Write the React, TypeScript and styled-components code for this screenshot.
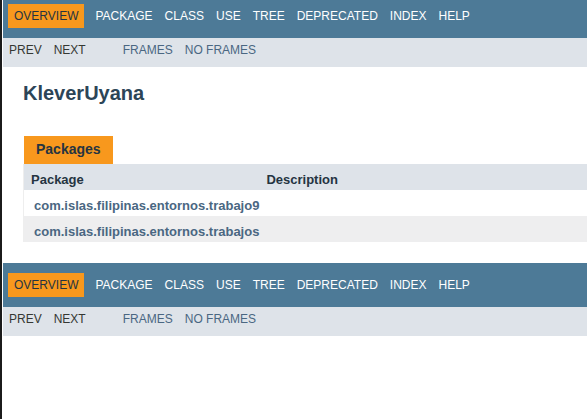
import React from 'react'
import { styled, createGlobalStyle } from 'styled-components'

const GlobalStyle = createGlobalStyle`
    html, body {
        margin: 0;
        padding: 0;
        overflow: hidden;
        background: #ffffff;
    }
    body {
        font-family: "Liberation Sans", Arial, Helvetica, sans-serif;
        font-size: 14px;
        color: #353833;
    }
`

const mainLinks = ['Overview', 'Package', 'Class', 'Use', 'Tree', 'Deprecated', 'Index', 'Help']

const packages = [
    'com.islas.filipinas.entornos.trabajo9',
    'com.islas.filipinas.entornos.trabajos',
]

const TopNavigation = ({ cropped }: { cropped?: boolean }) => (
    <>
        <NavBar $cropped={cropped}>
            <NavList>
                {mainLinks.map((label) => (
                    <NavItem key={label} $active={label === 'Overview'}>{label}</NavItem>
                ))}
            </NavList>
        </NavBar>
        <SubNav>
            <NavList>
                <SubItem>Prev</SubItem>
                <SubItem>Next</SubItem>
            </NavList>
            <NavList>
                <SubItem $link>Frames</SubItem>
                <SubItem $link>No Frames</SubItem>
            </NavList>
        </SubNav>
    </>
)

const App = () => {
    return (
        <Page>
            <GlobalStyle />
            <TopNavigation cropped />

            <Header>
                <Title>KleverUyana</Title>
            </Header>

            <ContentContainer>
                <CaptionTab>Packages</CaptionTab>
                <SummaryTable>
                    <thead>
                        <tr>
                            <HeadCell $first>Package</HeadCell>
                            <HeadCell>Description</HeadCell>
                        </tr>
                    </thead>
                    <tbody>
                        {packages.map((name, index) => (
                            <Row key={name} $alt={index % 2 === 1}>
                                <NameCell><PackageLink>{name}</PackageLink></NameCell>
                                <DescCell>&nbsp;</DescCell>
                            </Row>
                        ))}
                    </tbody>
                </SummaryTable>
            </ContentContainer>

            <TopNavigation />
        </Page>
    )
}

const Page = styled.div`
    min-height: 100vh;
    box-sizing: border-box;
    border-left: 2px solid #1b1b1b;
    padding-left: 1px;
`

const NavBar = styled.div<{ $cropped?: boolean }>`
    background-color: #4d7a97;
    height: 33.6px;
    padding-top: ${({ $cropped }) => ($cropped ? '4.4px' : '10px')};
    font-size: 12px;
    overflow: hidden;
    display: flex;
`

const NavList = styled.ul`
    display: flex;
    margin: 0 25px 0 0;
    padding: 0;
    list-style: none;
    align-self: flex-start;
`

const NavItem = styled.li<{ $active?: boolean }>`
    padding: 5px 6px;
    line-height: 14px;
    text-transform: uppercase;
    color: ${({ $active }) => ($active ? '#253441' : '#ffffff')};
    background-color: ${({ $active }) => ($active ? '#f8981d' : 'transparent')};
    margin: ${({ $active }) => ($active ? '0 5px' : '0')};
`

const SubNav = styled.div`
    background-color: #dee3e9;
    height: 29px;
    font-size: 12px;
    display: flex;
    overflow: hidden;
`

const SubItem = styled.li<{ $link?: boolean }>`
    padding: 5px 6px;
    line-height: 14px;
    text-transform: uppercase;
    color: ${({ $link }) => ($link ? '#4a6782' : '#353833')};
`

const Header = styled.div`
    margin: 0 20px;
    padding-top: 5px;
`

const Title = styled.h1`
    margin: 10px 0;
    font-size: 20px;
    line-height: 23px;
    font-weight: bold;
    color: #2c4557;
`

const ContentContainer = styled.div`
    padding: 21px 0 21px 20px;
`

const CaptionTab = styled.div`
    display: inline-block;
    box-sizing: content-box;
    height: 16px;
    line-height: 16px;
    padding: 5px 12px 7px 12px;
    margin-left: 1px;
    background-color: #f8981d;
    color: #253441;
    font-size: 14px;
    font-weight: bold;
    white-space: nowrap;
    vertical-align: top;
`

const SummaryTable = styled.table`
    width: 100%;
    border-collapse: collapse;
    border-left: 1px solid #eeeeee;
`

const HeadCell = styled.th<{ $first?: boolean }>`
    background-color: #dee3e9;
    text-align: left;
    padding: 8px 3px 3px 7px;
    font-size: 13px;
    line-height: 15px;
    font-weight: bold;
    color: #253441;
    white-space: nowrap;
    width: ${({ $first }) => ($first ? '1%' : 'auto')};
`

const Row = styled.tr<{ $alt?: boolean }>`
    background-color: ${({ $alt }) => ($alt ? '#eeeeef' : '#ffffff')};
`

const NameCell = styled.td`
    padding: 8px 0 3px 10px;
    font-size: 13px;
    line-height: 15px;
    white-space: nowrap;
    vertical-align: top;
`

const DescCell = styled.td`
    padding: 8px 0 3px 10px;
    font-size: 13px;
    line-height: 15px;
`

const PackageLink = styled.a`
    color: #4a6782;
    font-weight: bold;
    text-decoration: none;
`

export default App
